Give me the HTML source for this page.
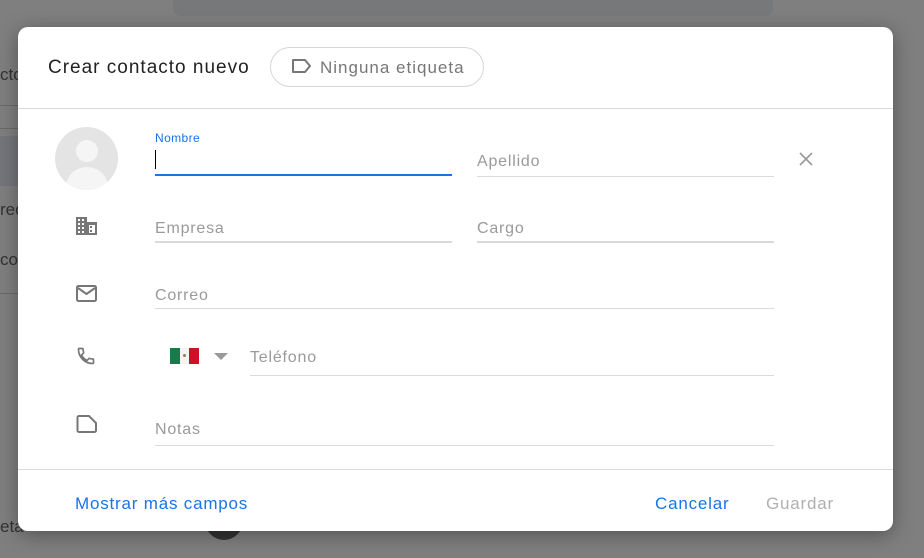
<!DOCTYPE html>
<html><head><meta charset="utf-8"><style>
body{margin:0;width:924px;height:558px;background:#7f7f7f;position:relative;overflow:hidden;font-family:"Liberation Sans",Arial,sans-serif}
.a{position:absolute}
.dlg{left:18px;top:27px;width:875px;height:504px;background:#fff;border-radius:10px;box-shadow:0 4px 20px rgba(0,0,0,.35)}
.ph{color:#9a9a9a;font-size:16px;letter-spacing:.8px}
.ln{height:1px;background:#dadada}
.btn{font-size:17px;letter-spacing:.8px}
</style></head><body>
<div class="a" style="left:173px;top:0;width:600px;height:16px;background:#77787a;border-radius:0 0 8px 8px"></div>
<div class="a" style="left:0;top:65px;color:#333;font-size:17px">cto</div>
<div class="a" style="left:0;top:105px;width:18px;height:1px;background:#6a6a6a"></div>
<div class="a" style="left:0;top:128px;width:18px;height:1px;background:#6a6a6a"></div>
<div class="a" style="left:0;top:136px;width:18px;height:50px;background:#74767b"></div>
<div class="a" style="left:0;top:200px;color:#333;font-size:17px">rec</div>
<div class="a" style="left:0;top:250px;color:#333;font-size:17px">co</div>
<div class="a" style="left:0;top:293px;width:18px;height:1px;background:#6a6a6a"></div>
<div class="a" style="left:0;top:517px;color:#333;font-size:17px">eta</div>
<div class="a" style="left:205px;top:520px;width:38px;height:20px;background:#333;border-radius:0 0 19px 19px"></div>
<div class="a dlg">
 <div class="a" style="left:30px;top:30px;font-size:19px;color:#222;letter-spacing:1px">Crear contacto nuevo</div>
 <div class="a" style="left:252px;top:20px;width:212px;height:38px;border:1px solid #d6d6d6;border-radius:20px"></div>
 <svg class="a" style="left:273px;top:30px" width="22" height="18" viewBox="0 0 22 18"><path d="M2 3h12l5 6-5 6H2z" fill="none" stroke="#777" stroke-width="2" stroke-linejoin="round"/></svg>
 <div class="a" style="left:302px;top:31px;font-size:17px;color:#777;letter-spacing:1px">Ninguna etiqueta</div>
 <div class="a ln" style="left:0;top:81px;width:875px"></div>
 <div class="a" style="left:37px;top:100px;width:63px;height:63px;border-radius:50%;background:#e4e4e4;overflow:hidden">
  <div class="a" style="left:21px;top:13px;width:22px;height:22px;border-radius:50%;background:#f5f5f5"></div>
  <div class="a" style="left:11px;top:40px;width:42px;height:40px;border-radius:50%;background:#f5f5f5"></div>
 </div>
 <div class="a" style="left:137px;top:104px;font-size:12px;color:#1a73e8;letter-spacing:.4px">Nombre</div>
 <div class="a" style="left:137px;top:123px;width:1px;height:19px;background:#000"></div>
 <div class="a" style="left:137px;top:147px;width:297px;height:2px;background:#1a73e8"></div>
 <div class="a ph" style="left:459px;top:126px">Apellido</div>
 <div class="a ln" style="left:459px;top:149px;width:297px"></div>
 <svg class="a" style="left:780px;top:124px" width="16" height="16" viewBox="0 0 16 16"><path d="M2 2L14 14M14 2L2 14" stroke="#999" stroke-width="1.6"/></svg>
 <svg class="a" style="left:58px;top:190px" width="21" height="18" viewBox="0 0 21 18"><rect x="0" y="0" width="11" height="18" fill="#777"/><rect x="11" y="5" width="10" height="13" fill="#777"/><g fill="#fff"><rect x="2" y="2" width="2" height="2"/><rect x="6" y="2" width="2" height="2"/><rect x="2" y="6" width="2" height="2"/><rect x="6" y="6" width="2" height="2"/><rect x="2" y="10" width="2" height="2"/><rect x="6" y="10" width="2" height="2"/><rect x="2" y="14" width="2" height="2"/><rect x="6" y="14" width="2" height="2"/><rect x="13" y="8" width="6" height="8"/></g><rect x="14" y="9" width="2" height="2" fill="#777"/><rect x="14" y="13" width="2" height="2" fill="#777"/></svg>
 <div class="a ph" style="left:137px;top:193px">Empresa</div>
 <div class="a" style="left:137px;top:214px;width:297px;height:2px;background:#dadada"></div>
 <div class="a ph" style="left:459px;top:193px">Cargo</div>
 <div class="a" style="left:459px;top:214px;width:297px;height:2px;background:#dadada"></div>
 <svg class="a" style="left:58px;top:258px" width="21" height="17" viewBox="0 0 21 17"><rect x="1" y="1" width="19" height="15" rx="1.5" fill="none" stroke="#777" stroke-width="2"/><path d="M2 3l8.5 6L19 3" fill="none" stroke="#777" stroke-width="2"/></svg>
 <div class="a ph" style="left:137px;top:260px">Correo</div>
 <div class="a ln" style="left:137px;top:281px;width:619px"></div>
 <svg class="a" style="left:58px;top:319px" width="20" height="20" viewBox="0 0 24 24"><path d="M6.6 10.8c1.4 2.8 3.8 5.1 6.6 6.6l2.2-2.2c.3-.3.7-.4 1-.2 1.1.4 2.3.6 3.6.6.6 0 1 .4 1 1V20c0 .6-.4 1-1 1C10.6 21 3 13.4 3 4c0-.6.4-1 1-1h3.5c.6 0 1 .4 1 1 0 1.3.2 2.5.6 3.6.1.3 0 .7-.2 1z" fill="none" stroke="#777" stroke-width="2"/></svg>
 <div class="a" style="left:152px;top:321px;width:10px;height:16px;background:#1a7a4c"></div>
 <div class="a" style="left:162px;top:321px;width:9px;height:16px;background:#f4f4f4"></div>
 <div class="a" style="left:165px;top:327px;width:3px;height:3px;background:#9b7b4a;border-radius:50%"></div>
 <div class="a" style="left:171px;top:321px;width:10px;height:16px;background:#ce1126"></div>
 <div class="a" style="left:196px;top:326px;width:0;height:0;border-left:7px solid transparent;border-right:7px solid transparent;border-top:7px solid #999"></div>
 <div class="a ph" style="left:232px;top:322px">Teléfono</div>
 <div class="a ln" style="left:232px;top:348px;width:524px"></div>
 <svg class="a" style="left:58px;top:388px" width="21" height="18" viewBox="0 0 21 18"><path d="M3 1h10l7 7v7.5c0 .8-.7 1.5-1.5 1.5H3c-.8 0-1.5-.7-1.5-1.5v-13C1.5 1.7 2.2 1 3 1z" fill="none" stroke="#777" stroke-width="2"/></svg>
 <div class="a ph" style="left:137px;top:394px">Notas</div>
 <div class="a ln" style="left:137px;top:418px;width:619px"></div>
 <div class="a ln" style="left:0;top:442px;width:875px"></div>
 <div class="a btn" style="left:57px;top:467px;color:#1a73e8">Mostrar más campos</div>
 <div class="a btn" style="left:637px;top:467px;color:#1a73e8">Cancelar</div>
 <div class="a btn" style="left:748px;top:467px;color:#b0b0b0">Guardar</div>
</div>
</body></html>
